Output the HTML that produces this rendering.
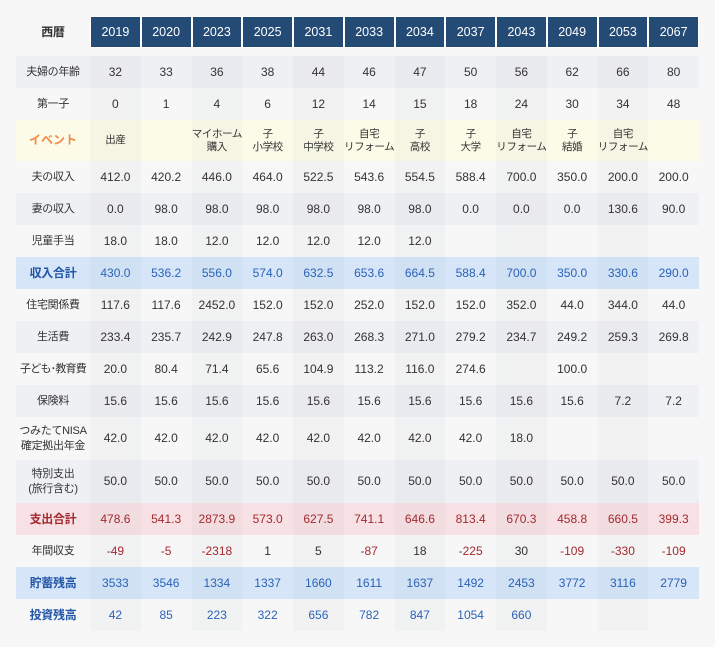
<!DOCTYPE html>
<html><head><meta charset="utf-8"><style>
body{margin:0;background:#f7f7f7;width:715px;height:647px;overflow:hidden;font-family:"Liberation Sans","Noto Sans CJK JP",sans-serif;}
table{position:absolute;left:16px;top:16px;border-collapse:collapse;table-layout:fixed;width:683px;}
td{padding:0;text-align:center;font-size:12px;color:#333;line-height:15px;white-space:nowrap;overflow:visible;}
td.l{width:74px;font-size:11px;letter-spacing:-0.3px;}
tr.h td{height:40px;vertical-align:top;}
tr.h td div{height:30px;line-height:30px;background:#244a76;color:#fff;border:1px solid #fff;font-size:12.5px;}
tr.h td.l{line-height:32px;font-weight:bold;font-size:12px;}
tr td:nth-child(even){background-image:linear-gradient(rgba(0,10,60,.022),rgba(0,10,60,.022));}
tr.h td{background-image:none!important;}
tr.a{height:32px;background:#eff0f3}
tr.b{height:32px;background:#f7f7f7}
tr.ev{height:41px;background:#fbfbe7}
tr.ev td{font-size:10.5px;line-height:13px;letter-spacing:-0.4px}
tr.ev td.l{color:#f5894a;font-weight:bold;font-size:12px;letter-spacing:0}
tr.t1{height:43px;background:#f7f7f7}
tr.t2{height:43px;background:#eff0f3}
tr.bl{height:32px;background:#d6e6f8}
tr.bl td{color:#2a62b8}
tr.bl td.l,tr.bb td.l{font-weight:bold;color:#2256a8;font-size:12px}
tr.bb td{color:#2a62b8}
tr.pk{height:32px;background:#f7e1e4}
tr.pk td{color:#a32a30}
tr.pk td.l{font-weight:bold;font-size:12px}
.r{color:#a32a30!important}
</style></head><body>
<table>
<tr class="h"><td class="l">西暦</td><td><div>2019</div></td><td><div>2020</div></td><td><div>2023</div></td><td><div>2025</div></td><td><div>2031</div></td><td><div>2033</div></td><td><div>2034</div></td><td><div>2037</div></td><td><div>2043</div></td><td><div>2049</div></td><td><div>2053</div></td><td><div>2067</div></td></tr>
<tr class="a"><td class="l">夫婦の年齢</td><td>32</td><td>33</td><td>36</td><td>38</td><td>44</td><td>46</td><td>47</td><td>50</td><td>56</td><td>62</td><td>66</td><td>80</td></tr>
<tr class="b"><td class="l">第一子</td><td>0</td><td>1</td><td>4</td><td>6</td><td>12</td><td>14</td><td>15</td><td>18</td><td>24</td><td>30</td><td>34</td><td>48</td></tr>
<tr class="ev"><td class="l">イベント</td><td>出産</td><td></td><td>マイホーム<br>購入</td><td>子<br>小学校</td><td>子<br>中学校</td><td>自宅<br>リフォーム</td><td>子<br>高校</td><td>子<br>大学</td><td>自宅<br>リフォーム</td><td>子<br>結婚</td><td>自宅<br>リフォーム</td><td></td></tr>
<tr class="b"><td class="l">夫の収入</td><td>412.0</td><td>420.2</td><td>446.0</td><td>464.0</td><td>522.5</td><td>543.6</td><td>554.5</td><td>588.4</td><td>700.0</td><td>350.0</td><td>200.0</td><td>200.0</td></tr>
<tr class="a"><td class="l">妻の収入</td><td>0.0</td><td>98.0</td><td>98.0</td><td>98.0</td><td>98.0</td><td>98.0</td><td>98.0</td><td>0.0</td><td>0.0</td><td>0.0</td><td>130.6</td><td>90.0</td></tr>
<tr class="b"><td class="l">児童手当</td><td>18.0</td><td>18.0</td><td>12.0</td><td>12.0</td><td>12.0</td><td>12.0</td><td>12.0</td><td></td><td></td><td></td><td></td><td></td></tr>
<tr class="bl"><td class="l">収入合計</td><td>430.0</td><td>536.2</td><td>556.0</td><td>574.0</td><td>632.5</td><td>653.6</td><td>664.5</td><td>588.4</td><td>700.0</td><td>350.0</td><td>330.6</td><td>290.0</td></tr>
<tr class="b"><td class="l">住宅関係費</td><td>117.6</td><td>117.6</td><td>2452.0</td><td>152.0</td><td>152.0</td><td>252.0</td><td>152.0</td><td>152.0</td><td>352.0</td><td>44.0</td><td>344.0</td><td>44.0</td></tr>
<tr class="a"><td class="l">生活費</td><td>233.4</td><td>235.7</td><td>242.9</td><td>247.8</td><td>263.0</td><td>268.3</td><td>271.0</td><td>279.2</td><td>234.7</td><td>249.2</td><td>259.3</td><td>269.8</td></tr>
<tr class="b"><td class="l" style="letter-spacing:-0.8px">子ども･教育費</td><td>20.0</td><td>80.4</td><td>71.4</td><td>65.6</td><td>104.9</td><td>113.2</td><td>116.0</td><td>274.6</td><td></td><td>100.0</td><td></td><td></td></tr>
<tr class="a"><td class="l">保険料</td><td>15.6</td><td>15.6</td><td>15.6</td><td>15.6</td><td>15.6</td><td>15.6</td><td>15.6</td><td>15.6</td><td>15.6</td><td>15.6</td><td>7.2</td><td>7.2</td></tr>
<tr class="t1"><td class="l">つみたてNISA<br>確定拠出年金</td><td>42.0</td><td>42.0</td><td>42.0</td><td>42.0</td><td>42.0</td><td>42.0</td><td>42.0</td><td>42.0</td><td>18.0</td><td></td><td></td><td></td></tr>
<tr class="t2"><td class="l">特別支出<br>(旅行含む)</td><td>50.0</td><td>50.0</td><td>50.0</td><td>50.0</td><td>50.0</td><td>50.0</td><td>50.0</td><td>50.0</td><td>50.0</td><td>50.0</td><td>50.0</td><td>50.0</td></tr>
<tr class="pk"><td class="l">支出合計</td><td>478.6</td><td>541.3</td><td>2873.9</td><td>573.0</td><td>627.5</td><td>741.1</td><td>646.6</td><td>813.4</td><td>670.3</td><td>458.8</td><td>660.5</td><td>399.3</td></tr>
<tr class="b"><td class="l">年間収支</td><td class="r">-49</td><td class="r">-5</td><td class="r">-2318</td><td>1</td><td>5</td><td class="r">-87</td><td>18</td><td class="r">-225</td><td>30</td><td class="r">-109</td><td class="r">-330</td><td class="r">-109</td></tr>
<tr class="bl"><td class="l">貯蓄残高</td><td>3533</td><td>3546</td><td>1334</td><td>1337</td><td>1660</td><td>1611</td><td>1637</td><td>1492</td><td>2453</td><td>3772</td><td>3116</td><td>2779</td></tr>
<tr class="b bb" style="height:32px"><td class="l">投資残高</td><td>42</td><td>85</td><td>223</td><td>322</td><td>656</td><td>782</td><td>847</td><td>1054</td><td>660</td><td></td><td></td><td></td></tr>
</table>
</body></html>
